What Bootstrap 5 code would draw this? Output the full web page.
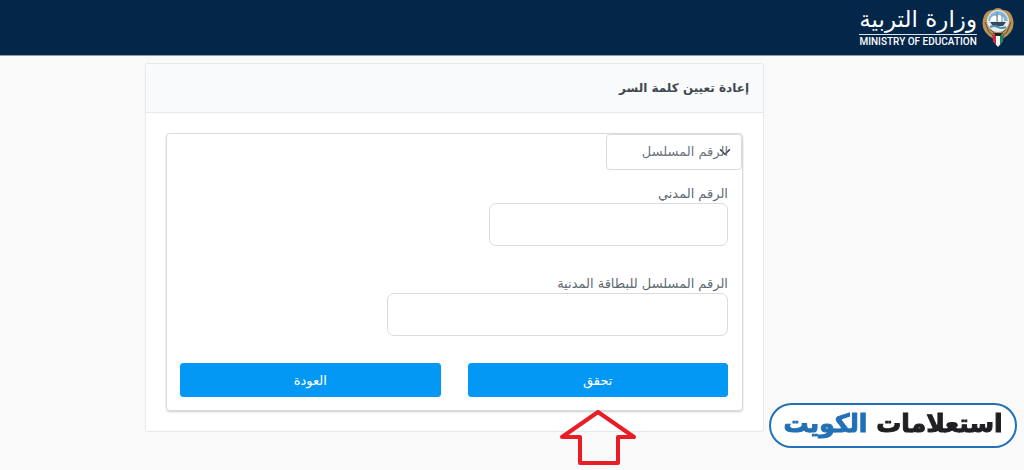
<!DOCTYPE html>
<html lang="ar" dir="rtl">
<head>
<meta charset="utf-8">
<meta name="viewport" content="width=device-width, initial-scale=1">
<title>إعادة تعيين كلمة السر</title>
<link href="https://cdn.jsdelivr.net/npm/bootstrap@5.3.0/dist/css/bootstrap.min.css" rel="stylesheet">
<style>
  body { background: #f9f9fa; color: #5f6b73; font-family: "DejaVu Sans", sans-serif; font-size: 13px; line-height: 18px; }
  .top-bar { background: #042649; border-bottom: 1px solid #8b9bad; min-height: 56px; padding: 2px 9px 4px; }
  .brand-ar { font-size: 23px; line-height: 29px; }
  .brand-en { font-family: Roboto, sans-serif; font-size: 10px; font-weight: 500; line-height: 13px; border-top: 1px solid #dbe2ea; }
  .page-grid { padding: 7px 260px 36px 145px; }
  .reset-card { border: 1px solid #e4e9ee; border-radius: 3px; }
  .reset-card > .card-header { background: #f8fafb; border-color: #e4e9ee; padding: 15px 14px; color: #3f484f; font-size: 12px; line-height: 18px; }
  .reset-card > .card-body { padding: 20px; }
  .form-panel { border: 1px solid #d9dcde; border-radius: 4px; box-shadow: 0 1px 2px #0003; }
  .id-type { width: 136px; height: 36px; padding: 6px 13px; border-color: #d9dcde; border-radius: 4px; color: #6b757d; font-size: 13px; line-height: 18px; background-position: right 8px center; }
  .fields { padding: 14px 14px 13px 13px; }
  .id-input { height: 43px; border-color: #d9dcde; border-radius: 7px; }
  .id-label { display: block; line-height: 19px; }
  .second-label { margin-top: 28px; }
  .w-civil { width: 239px; }
  .w-serial { width: 341px; }
  .btn-action { --bs-btn-bg: #0398f4; --bs-btn-border-color: #0398f4; --bs-btn-color: #fff; --bs-btn-hover-bg: #0284d6; --bs-btn-hover-color: #fff; border-radius: 3px; font-size: 13px; line-height: 18px; padding: 8px 12px 6px; }
  .btn-row { gap: 27px; margin-top: 27px; }
  .pointer-arrow { top: 46px; }
  .site-mark { right: 7px; bottom: 22px; width: 248px; height: 45px; border: 2px solid #2270b5; border-radius: 23px; background: #fff; color: #202024; font-size: 25px; line-height: 30px; padding-bottom: 4px; -webkit-text-stroke: 1px; }
  .site-mark span { color: #2270b5; }
  @media (max-width: 900px) {
    .page-grid { padding-left: 16px; padding-right: 16px; }
    .w-civil, .w-serial { width: 100%; }
  }
</style>
</head>
<body>
<header class="top-bar d-flex align-items-center text-white">
  <a href="#" class="d-flex align-items-center gap-1 text-white text-decoration-none">
    <svg width="34" height="40" viewBox="0 0 34 40" aria-hidden="true">
      <path d="M2 12Q4 3 12 3Q17 -1 22 3Q30 3 32 12Q35 25 21 32H13Q-1 25 2 12Z" fill="#b79358"/>
      <path d="M4 15l4 10 6 5M30 15l-4 10-6 5M7 13l3 10 5 5M27 13l-3 10-5 5" fill="none" stroke="#665037" stroke-width="1"/>
      <circle cx="17" cy="14" r="11" fill="#e4edf1"/>
      <path d="M7 14a10 10 0 0 1 20 0Z" fill="#84b7d5"/>
      <path d="M10 11q3-4 6-1v4h-7zM17 8q6 0 6 6h-6z" fill="#fff"/>
      <path d="M16 5v10M21 8v7" stroke="#6f8798"/>
      <path d="M9 15h16l-3 4H12z" fill="#35495a"/>
      <path d="M9 20q4-2 8 0t8 0" fill="none" stroke="#4c91b8" stroke-width="2"/>
      <path d="M12 27h10v7l-5 6-5-6z" fill="#f4f5f4"/>
      <path d="M11 27l4 1v10l-3-4z" fill="#c52e38"/>
      <path d="M23 27l-4 1v10l3-4z" fill="#277b55"/>
      <path d="M12 26h10l-3 3h-4z" fill="#1d2328"/>
    </svg>
    <span class="d-flex flex-column text-center">
      <span class="brand-ar">وزارة التربية</span>
      <span class="brand-en" dir="ltr">MINISTRY OF EDUCATION</span>
    </span>
  </a>
</header>

<main class="page-grid">
  <section class="card reset-card">
    <h1 class="card-header fw-bold mb-0">إعادة تعيين كلمة السر</h1>
    <div class="card-body">
      <form class="form-panel">
        <select class="form-select id-type" aria-label="نوع الرقم">
          <option>الرقم المسلسل</option>
        </select>
        <div class="fields">
          <label for="civil" class="id-label">الرقم المدني</label>
          <input id="civil" type="text" class="form-control id-input w-civil">
          <label for="serial" class="id-label second-label">الرقم المسلسل للبطاقة المدنية</label>
          <input id="serial" type="text" class="form-control id-input w-serial">
          <div class="d-flex btn-row">
            <div class="flex-fill w-50 position-relative">
              <button type="button" class="btn btn-action w-100">تحقق</button>
              <svg class="pointer-arrow position-absolute start-50 translate-middle-x" width="80" height="58" viewBox="0 0 80 58" aria-hidden="true">
                <path d="M40 3L76 28H60V54H22V28H4Z" fill="none" stroke="#e91d25" stroke-width="4" stroke-linejoin="round"/>
              </svg>
            </div>
            <div class="flex-fill w-50">
              <button type="button" class="btn btn-action w-100">العودة</button>
            </div>
          </div>
        </div>
      </form>
    </div>
  </section>
</main>
<div class="site-mark position-fixed d-flex align-items-center justify-content-center fw-bold text-nowrap"><div>استعلامات <span>الكويت</span></div></div>
<script src="https://cdn.jsdelivr.net/npm/bootstrap@5.3.0/dist/js/bootstrap.bundle.min.js"></script>
</body>
</html>
